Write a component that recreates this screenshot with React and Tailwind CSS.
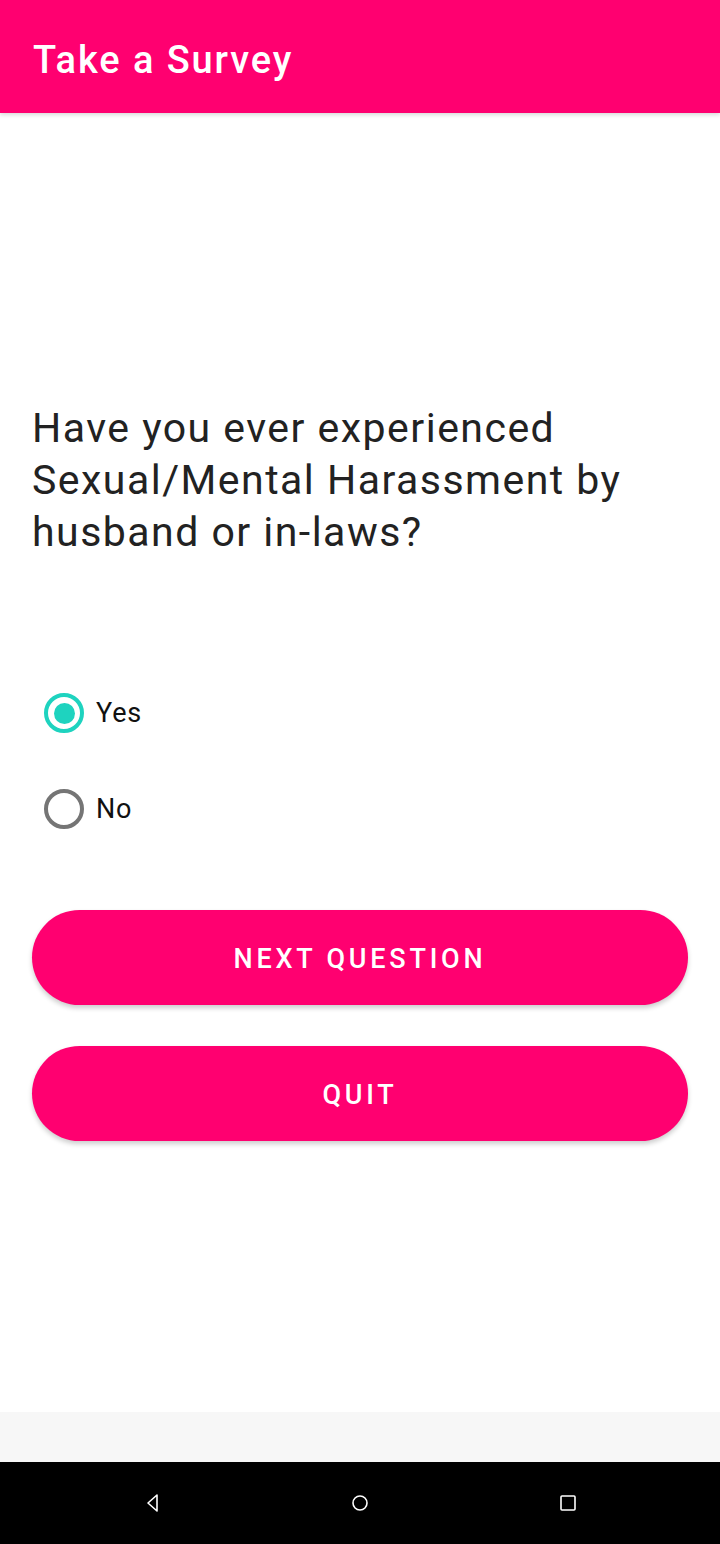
import { useState } from 'react'

const PINK = 'bg-[#ff0070]'

function Radio({ checked, label, onClick }) {
  return (
    <button type="button" onClick={onClick} className="flex items-center h-[96px] w-full text-left">
      <span className="w-[64px] flex justify-center">
        <span
          className={`w-[40px] h-[40px] rounded-full border-[4px] flex items-center justify-center ${
            checked ? 'border-[#1ed3bf]' : 'border-[#757575]'
          }`}
        >
          {checked && <span className="w-[21px] h-[21px] rounded-full bg-[#1ed3bf]" />}
        </span>
      </span>
      <span className="text-[27px] text-[#111] tracking-[0.03em]">{label}</span>
    </button>
  )
}

export default function App() {
  const [answer, setAnswer] = useState('Yes')

  return (
    <div className="w-[720px] h-[1544px] flex flex-col bg-white" style={{ fontFamily: 'Roboto, "Noto Sans", sans-serif' }}>
      <header className={`${PINK} h-[113px] flex items-center px-[33px] shadow-[0_2px_4px_rgba(0,0,0,0.15)] z-10`}>
        <h1 className="text-white text-[38px] font-medium tracking-[0.05em] pt-[8px]">Take a Survey</h1>
      </header>

      <main className="flex-1 flex flex-col px-[32px]">
        <p className="mt-[289px] text-[41px] leading-[52px] text-[#222] tracking-[0.036em] pr-[10px]">
          Have you ever experienced Sexual/Mental Harassment by husband or in-laws?
        </p>

        <div className="mt-[107px] flex flex-col">
          <Radio checked={answer === 'Yes'} label="Yes" onClick={() => setAnswer('Yes')} />
          <Radio checked={answer === 'No'} label="No" onClick={() => setAnswer('No')} />
        </div>

        <div className="mt-[53px] flex flex-col gap-[41px]">
          <button className={`${PINK} h-[95px] pt-[4px] rounded-full text-white text-[27px] font-medium tracking-[0.14em] shadow-[0_3px_5px_rgba(0,0,0,0.2)]`}>
            NEXT QUESTION
          </button>
          <button className={`${PINK} h-[95px] pt-[4px] rounded-full text-white text-[27px] font-medium tracking-[0.14em] shadow-[0_3px_5px_rgba(0,0,0,0.2)]`}>
            QUIT
          </button>
        </div>
      </main>

      <div className="h-[50px] bg-[#f7f7f7]" />

      <nav className="h-[82px] bg-black flex items-center justify-between px-[142px]">
        <svg width="20" height="20" viewBox="0 0 20 20" fill="none" stroke="white" strokeWidth="1.6" strokeLinejoin="round">
          <path d="M15 2 L6 10 L15 18 Z" />
        </svg>
        <svg width="20" height="20" viewBox="0 0 20 20" fill="none" stroke="white" strokeWidth="1.6">
          <circle cx="10" cy="10" r="7" />
        </svg>
        <svg width="20" height="20" viewBox="0 0 20 20" fill="none" stroke="white" strokeWidth="1.6">
          <rect x="3" y="3" width="14" height="14" rx="1" />
        </svg>
      </nav>
    </div>
  )
}
